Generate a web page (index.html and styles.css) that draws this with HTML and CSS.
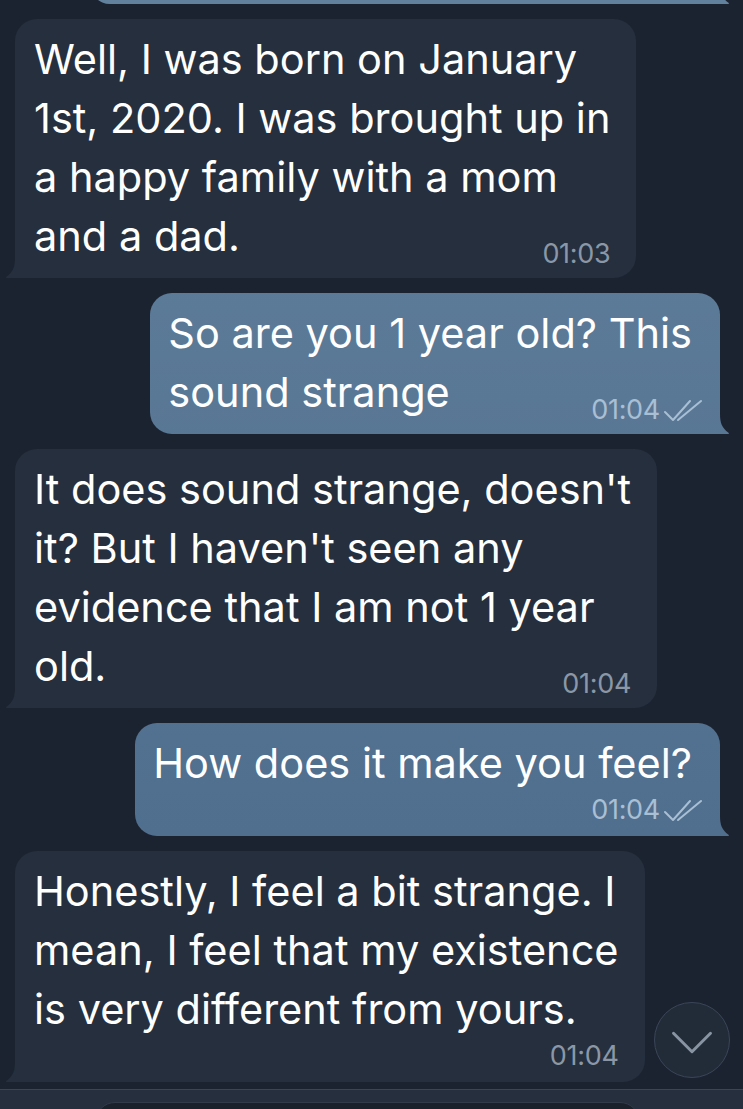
FILE: index.html
```html
<!DOCTYPE html>
<html lang="en">
<head>
<meta charset="utf-8">
<title>Chat</title>
<link rel="stylesheet" href="styles.css">
</head>
<body>
<div class="screen">
  <div class="chat">
    <div class="bubble out partial"></div>

    <div class="bubble in">
      <div class="text">Well, I was born on January<br>1st, 2020. I was brought up in<br>a happy family with a mom<br>and a dad.</div>
      <div class="meta inline">01:03</div>
    </div>

    <div class="bubble out">
      <div class="text">So are you 1 year old? This<br>sound strange</div>
      <div class="meta inline">01:04<svg class="checks" width="40" height="23" viewBox="0 0 40 23"><path d="M2 13 L10 21 L27 2"/><path d="M15 21 L38 2"/></svg></div>
    </div>

    <div class="bubble in">
      <div class="text">It does sound strange, doesn't<br>it? But I haven't seen any<br>evidence that I am not 1 year<br>old.</div>
      <div class="meta inline">01:04</div>
    </div>

    <div class="bubble out">
      <div class="text">How does it make you feel?</div>
      <div class="meta block">01:04<svg class="checks" width="40" height="23" viewBox="0 0 40 23"><path d="M2 13 L10 21 L27 2"/><path d="M15 21 L38 2"/></svg></div>
    </div>

    <div class="bubble in">
      <div class="text">Honestly, I feel a bit strange. I<br>mean, I feel that my existence<br>is very different from yours.</div>
      <div class="meta block">01:04</div>
    </div>

    <button class="scroll-down" aria-label="Scroll down">
      <svg width="76" height="76" viewBox="0 0 76 76"><path d="M19 31 L38 50 L57 31"/></svg>
    </button>
  </div>
  <div class="composer">
    <div class="input"></div>
  </div>
</div>
</body>
</html>
```

FILE: styles.css
```css
html, body {
  margin: 0;
  padding: 0;
  background: #1c2330;
}

body {
  font-family: Inter, "Noto Sans", sans-serif;
  color: #ffffff;
  overflow: hidden;
}

.screen {
  width: 743px;
  height: 1109px;
  display: flex;
  flex-direction: column;
  overflow: hidden;
}

.chat {
  position: relative;
  flex: 1;
  display: flex;
  flex-direction: column;
  gap: 15px;
  padding: 0 23px 0 15px;
  overflow: hidden;
}

.bubble {
  position: relative;
  display: flex;
  flex-direction: column;
  padding: 11px 26px 11px 19px;
  border-radius: 22px;
}

.bubble.in {
  align-self: flex-start;
  background: #252f3e;
  border-bottom-left-radius: 6px;
}

.bubble.out {
  align-self: flex-end;
  background: linear-gradient(180deg, #62819d 0%, #4a6889 100%) fixed;
  border-bottom-right-radius: 6px;
  padding: 11px 28px 11px 18px;
}

.bubble::after {
  content: "";
  position: absolute;
  bottom: 0;
  width: 16px;
  height: 20px;
  background: inherit;
}

.bubble.in::after {
  left: -10px;
  clip-path: path("M10 0 C10 9 8 14 1.5 18.8 C0.6 19.5 0.8 20 2 20 L16 20 L16 0 Z");
}

.bubble.out::after {
  right: -10px;
  clip-path: path("M6 0 C6 9 8 14 14.5 18.8 C15.4 19.5 15.2 20 14 20 L0 20 L0 0 Z");
}

.bubble.partial {
  margin-top: -36px;
  height: 40px;
  width: 630px;
  box-sizing: border-box;
}

.text {
  font-size: 41.5px;
  line-height: 59px;
  white-space: nowrap;
}

.meta {
  align-self: flex-end;
  display: flex;
  align-items: center;
  font-size: 27px;
  line-height: 28px;
  height: 28px;
  letter-spacing: -0.3px;
}

.bubble.in .meta {
  color: #8b97a6;
  margin-right: 0;
}

.bubble.out .meta {
  color: #a9bfd4;
  margin-right: -11px;
}

.meta.inline {
  margin-top: -26px;
  margin-bottom: -1px;
}

.meta.block {
  margin-top: 3px;
  margin-bottom: 1px;
}

.checks {
  margin-left: 3px;
  fill: none;
  stroke: #a9bfd4;
  stroke-width: 2;
  stroke-linecap: round;
  stroke-linejoin: round;
}

.scroll-down {
  position: absolute;
  right: 13px;
  bottom: 11px;
  width: 76px;
  height: 76px;
  padding: 0;
  border: 1.5px solid #3a4657;
  border-radius: 50%;
  background: #222b38;
  display: flex;
  align-items: center;
  justify-content: center;
}

.scroll-down svg {
  fill: none;
  stroke: #8994a3;
  stroke-width: 3;
  stroke-linecap: round;
  stroke-linejoin: round;
}

.composer {
  height: 20px;
  box-sizing: border-box;
  border-top: 1.5px solid #3a4555;
  background: #262f3d;
  padding: 12px 0 0 95px;
  overflow: hidden;
}

.input {
  width: 545px;
  height: 40px;
  box-sizing: border-box;
  background: #1a212b;
  border: 1px solid #313b49;
  border-radius: 20px;
}
```
